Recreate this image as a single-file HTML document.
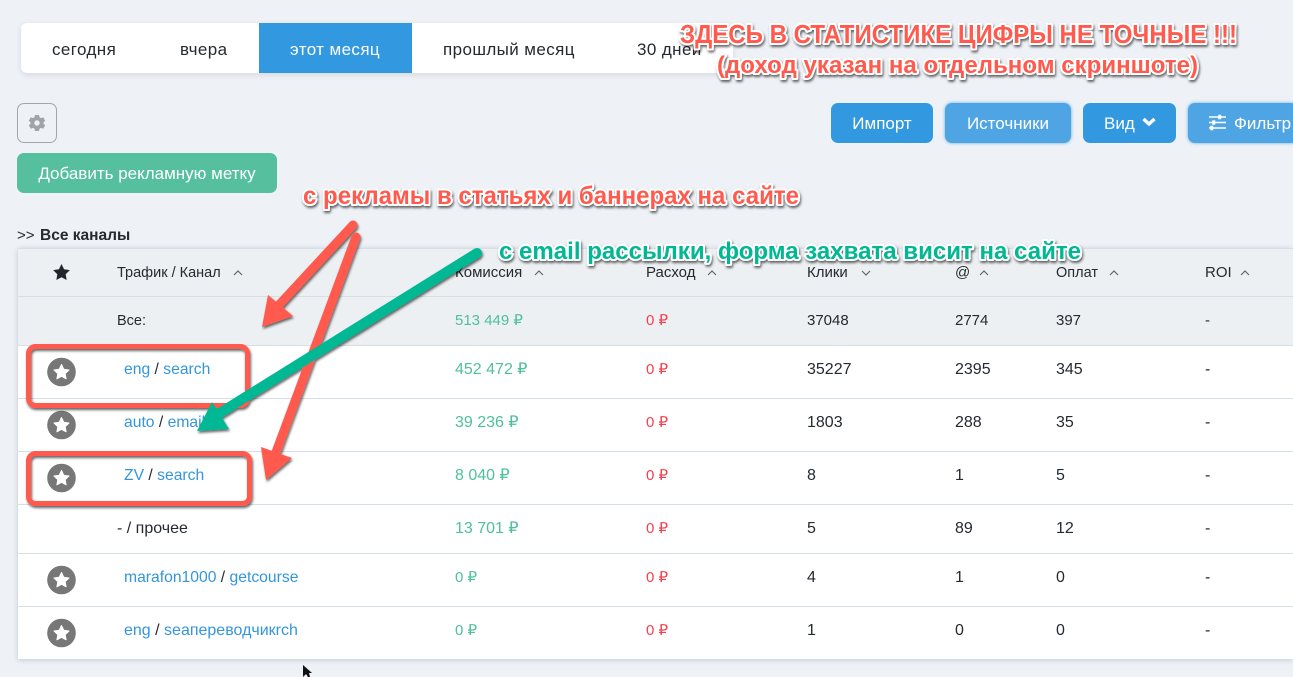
<!DOCTYPE html>
<html lang="ru"><head><meta charset="utf-8">
<style>
html,body{margin:0;padding:0}
body{width:1293px;height:677px;overflow:hidden;position:relative;background:#eef1f6;font-family:"Liberation Sans",sans-serif;color:#242a30;font-size:16px}
.a{position:absolute;white-space:nowrap}
.t{transform:translateY(calc(-50% + 2px));line-height:20px}
.tab{font-size:17px;letter-spacing:.4px}
.h{font-size:15px}
.m{font-size:15px}
.z{font-size:15px}
.b{position:absolute;top:103px;height:40px;line-height:41px;border-radius:7px;color:#fff;text-align:center;background:#3298e0;font-size:17px}
.l{background:#4fa5e4;box-shadow:0 0 3px #5aaee8}
.g{color:#4fc09a}.r{color:#f5404f}.k{color:#3396dc}
.lk{font-size:15.7px}
.line{position:absolute;left:18px;width:1275px;height:1px;background:#d5dfe5}
</style></head><body>
<div class="a" style="left:21px;top:23px;width:712px;height:50px;background:#fff;border-radius:6px;box-shadow:0 2px 6px rgba(40,60,90,.12)"></div>
<div class="a" style="left:259px;top:23px;width:153px;height:50px;background:#3298e0"></div>
<span class="a t tab" style="left:52px;top:48px">сегодня</span>
<span class="a t tab" style="left:180px;top:48px">вчера</span>
<span class="a t tab" style="left:290px;top:48px;color:#fff">этот месяц</span>
<span class="a t tab" style="left:443px;top:48px">прошлый месяц</span>
<span class="a t tab" style="left:637px;top:48px">30 дней</span>

<div class="a" style="left:17px;top:103px;width:38px;height:38px;border:1px solid #a3a6ab;border-radius:7px"></div>
<svg class="a" style="left:27px;top:113px" width="20" height="20" viewBox="0 0 20 20"><path fill="#a0a3a8" fill-rule="evenodd" d="M8 2h4l.5 2.300 1.500.8 2.200-.8 2 3.400-1.700 1.600v1.400l1.700 1.600-2 3.400-2.200-.8-1.500.8L12 18H8l-.5-2.300-1.500-.8-2.200.8-2-3.400 1.700-1.600V9.300L1.800 7.700l2-3.400 2.200.8 1.500-.8zM10 7.300a2.700 2.700 0 1 0 0 5.400 2.700 2.700 0 0 0 0-5.400z"/></svg>
<div class="b" style="left:17px;top:153px;width:260px;background:#56bf9d">Добавить рекламную метку</div>

<div class="b" style="left:831px;width:102px">Импорт</div>
<div class="b l" style="left:945px;width:126px">Источники</div>
<div class="b" style="left:1083px;width:93px;text-align:left;text-indent:21px">Вид</div>
<svg class="a" style="left:1141px;top:116px" width="16" height="12" viewBox="0 0 16 12"><path d="M2.500 3l5.500 5L13.500 3" fill="none" stroke="#fff" stroke-width="3.400"/></svg>
<div class="b l" style="left:1188px;width:110px;text-align:left;text-indent:46px">Фильтр</div>
<svg class="a" style="left:1208px;top:114px" width="19" height="17" viewBox="0 0 19 17"><g stroke="#fff" stroke-width="1.500" fill="#fff"><path d="M1 3h17M1 8.500h17M1 14h17"/><rect x="11" y="1.500" width="1.500" height="3"/><rect x="5" y="7" width="1.500" height="3"/><rect x="3" y="12.500" width="1.500" height="3"/></g></svg>

<span class="a t" style="left:17px;top:234px;font-size:15px">&gt;&gt;</span>
<span class="a t" style="left:40px;top:234px;font-size:15.5px;font-weight:700">Все каналы</span>

<div class="a" style="left:18px;top:248px;width:1275px;height:411px;background:#fff;box-shadow:0 1px 5px rgba(40,60,90,.22)"></div>
<div class="a" style="left:18px;top:248px;width:1275px;height:97px;background:#edf0f2"></div>
<div class="line" style="top:248px"></div><div class="line" style="top:296px"></div><div class="line" style="top:345px"></div><div class="line" style="top:398px"></div><div class="line" style="top:451px"></div><div class="line" style="top:504px"></div><div class="line" style="top:553px"></div><div class="line" style="top:606px"></div>

<svg class="a" style="left:53px;top:264px" width="17" height="16" viewBox="0 0 24 23"><path fill="#20262c" d="M12 0l3.700 7.600 8.300 1.200-6 5.900 1.400 8.300L12 19l-7.400 4L6 14.700 0 8.800l8.300-1.200z"/></svg>
<span class="a t" style="left:117px;top:271px;font-size:14.5px">Трафик / Канал</span>
<span class="a t h" style="left:455px;top:271px">Комиссия</span>
<span class="a t h" style="left:646px;top:271px">Расход</span>
<span class="a t h" style="left:807px;top:271px">Клики</span>
<span class="a t h" style="left:955px;top:271px">@</span>
<span class="a t" style="left:1056px;top:271px;font-size:14.5px">Оплат</span>
<span class="a t h" style="left:1205px;top:271px">ROI</span>
<svg class="a" style="left:0;top:265px" width="1293" height="15" viewBox="0 0 1293 15"><g fill="none" stroke="#666" stroke-width="1.200"><path d="M234 10l4-4 4 4M535 10l4-4 4 4M708 10l4-4 4 4M862 6l4 4 4-4M980 10l4-4 4 4M1110 10l4-4 4 4M1241 10l4-4 4 4"/></g></svg>

<span class="a t" style="left:117px;top:319px;font-size:14.5px">Все:</span>
<span class="a t g m" style="left:455px;top:319px">513 449 ₽</span><span class="a t r z" style="left:646px;top:319px">0 ₽</span><span class="a t m" style="left:807px;top:319px">37048</span><span class="a t m" style="left:955px;top:319px">2774</span><span class="a t m" style="left:1056px;top:319px">397</span><span class="a t m" style="left:1205px;top:319px">-</span>

<span class="a t lk" style="left:124px;top:368px"><span class="k">eng</span> / <span class="k">search</span></span>
<span class="a t g" style="left:455px;top:368px">452 472 ₽</span><span class="a t r z" style="left:646px;top:368px">0 ₽</span><span class="a t" style="left:807px;top:368px">35227</span><span class="a t" style="left:955px;top:368px">2395</span><span class="a t" style="left:1056px;top:368px">345</span><span class="a t" style="left:1205px;top:368px">-</span>

<span class="a t lk" style="left:124px;top:421px"><span class="k">auto</span> / <span class="k">email</span></span>
<span class="a t g" style="left:455px;top:421px">39 236 ₽</span><span class="a t r z" style="left:646px;top:421px">0 ₽</span><span class="a t" style="left:807px;top:421px">1803</span><span class="a t" style="left:955px;top:421px">288</span><span class="a t" style="left:1056px;top:421px">35</span><span class="a t" style="left:1205px;top:421px">-</span>

<span class="a t lk" style="left:124px;top:474px"><span class="k">ZV</span> / <span class="k">search</span></span>
<span class="a t g" style="left:455px;top:474px">8 040 ₽</span><span class="a t r z" style="left:646px;top:474px">0 ₽</span><span class="a t" style="left:807px;top:474px">8</span><span class="a t" style="left:955px;top:474px">1</span><span class="a t" style="left:1056px;top:474px">5</span><span class="a t" style="left:1205px;top:474px">-</span>

<span class="a t" style="left:117px;top:527px">- / прочее</span>
<span class="a t g" style="left:455px;top:527px">13 701 ₽</span><span class="a t r z" style="left:646px;top:527px">0 ₽</span><span class="a t" style="left:807px;top:527px">5</span><span class="a t" style="left:955px;top:527px">89</span><span class="a t" style="left:1056px;top:527px">12</span><span class="a t" style="left:1205px;top:527px">-</span>

<span class="a t lk" style="left:124px;top:576px"><span class="k">marafon1000</span> / <span class="k">getcourse</span></span>
<span class="a t g z" style="left:455px;top:576px">0 ₽</span><span class="a t r z" style="left:646px;top:576px">0 ₽</span><span class="a t" style="left:807px;top:576px">4</span><span class="a t" style="left:955px;top:576px">1</span><span class="a t" style="left:1056px;top:576px">0</span><span class="a t" style="left:1205px;top:576px">-</span>

<span class="a t" style="left:124px;top:629px"><span class="k">eng</span> / <span class="k">seaпереводчикrch</span></span>
<span class="a t g z" style="left:455px;top:629px">0 ₽</span><span class="a t r z" style="left:646px;top:629px">0 ₽</span><span class="a t" style="left:807px;top:629px">1</span><span class="a t" style="left:955px;top:629px">0</span><span class="a t" style="left:1056px;top:629px">0</span><span class="a t" style="left:1205px;top:629px">-</span>

<svg class="a" style="left:0;top:0" width="1293" height="677" viewBox="0 0 1293 677">
<defs>
<g id="st"><circle r="14.300" fill="#777"/><path fill="#fff" stroke="#fff" stroke-width="1" stroke-linejoin="round" d="M0-7.500l2.300 4.800 5.200.7-3.800 3.600.9 5.200L0 4.300l-4.600 2.500.9-5.200-3.800-3.600 5.200-.7z"/></g>
<filter id="sh" x="-10%" y="-30%" width="120%" height="160%"><feDropShadow dx="1" dy="2" stdDeviation="1.200" flood-color="#000" flood-opacity=".6"/></filter>
</defs>
<use href="#st" x="61.500" y="372"/><use href="#st" x="61.500" y="425"/><use href="#st" x="61.500" y="478"/><use href="#st" x="61.500" y="580"/><use href="#st" x="61.500" y="633"/>
<g filter="url(#sh)">
<rect x="28.500" y="346.500" width="219" height="59" rx="7" fill="none" stroke="#ff5a4d" stroke-width="5"/>
<rect x="28.500" y="453.500" width="221" height="50" rx="7" fill="none" stroke="#ff5a4d" stroke-width="5"/>
<path d="M353 225L278 306" stroke="#ff5a4d" stroke-width="9" stroke-linecap="round" fill="none"/>
<path d="M262 327L268 295L293 316z" fill="#ff5a4d"/>
<path d="M356 237L275 455" stroke="#ff5a4d" stroke-width="9" stroke-linecap="round" fill="none"/>
<path d="M266 480L261 447L292 458z" fill="#ff5a4d"/>
<path d="M477 253L215 416" stroke="#00b894" stroke-width="10" stroke-linecap="round" fill="none"/>
<path d="M197 431L212 402L229 429z" fill="#00b894"/>
<g font-family="'Liberation Sans',sans-serif" font-weight="700" stroke="#fff" stroke-width="4" stroke-linejoin="round" style="paint-order:stroke fill">
<text x="680" y="43" font-size="26" fill="#ff5a4d" textLength="557" lengthAdjust="spacingAndGlyphs">ЗДЕСЬ В СТАТИСТИКЕ ЦИФРЫ НЕ ТОЧНЫЕ !!!</text>
<text x="717" y="73" font-size="24" fill="#ff5a4d" textLength="481" lengthAdjust="spacingAndGlyphs">(доход указан на отдельном скриншоте)</text>
<text x="303" y="204" font-size="25" fill="#ff5a4d" textLength="496" lengthAdjust="spacingAndGlyphs">с рекламы в статьях и баннерах на сайте</text>
<text x="499" y="259" font-size="24" fill="#00b894" textLength="582" lengthAdjust="spacingAndGlyphs">с email рассылки, форма захвата висит на сайте</text>
</g>
</g>
<path d="M303 665v12l3-3 2 3h2l-1-4h3z" fill="#111"/>
</svg>
</body></html>
